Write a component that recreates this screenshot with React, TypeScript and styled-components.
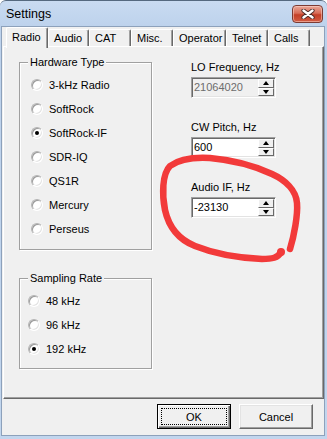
import styled, { createGlobalStyle } from "styled-components";

const GlobalStyle = createGlobalStyle`
  html, body {
    margin: 0;
    padding: 0;
    background: #ffffff;
  }
  body {
    font-family: "Liberation Sans", Arial, sans-serif;
    font-size: 11px;
    color: #000;
  }
`;

// window frame
const Window = styled.div`
  position: relative;
  width: 327px;
  height: 439px;
  box-sizing: border-box;
  display: flex;
  flex-direction: column;
  background: linear-gradient(#c9dbf1, #bdd2ec 26px, #c2d6ee);
  border-top: 1px solid #55697f;
  border-radius: 6px 6px 0 0;
  overflow: hidden;
`;

const TitleBar = styled.div`
  height: 25px;
  display: flex;
  align-items: flex-start;
  padding: 0 4px 0 6px;
`;

const Title = styled.div`
  font-size: 12.5px;
  line-height: 15px;
  padding-top: 6px;
`;

const CloseButton = styled.div`
  margin-left: auto;
  margin-top: 4px;
  width: 31px;
  height: 18px;
  box-sizing: border-box;
  border: 1px solid #7c3b33;
  border-radius: 4px;
  background: linear-gradient(#e9a898, #d86c57 45%, #c43f27 55%, #d35c43);
  box-shadow: inset 0 0 0 1px rgba(255, 220, 210, 0.5);
  display: flex;
  align-items: center;
  justify-content: center;
`;

const Client = styled.div`
  flex: 1;
  margin: 0 2px 3px 1px;
  border: 1px solid #8da1bb;
  background: #f0f0f0;
  display: flex;
  flex-direction: column;
`;

// tabs
const TabStrip = styled.div`
  height: 19px;
  display: flex;
  align-items: flex-end;
  padding-left: 4px;
  position: relative;
  z-index: 1;
`;

const Tab = styled.div<{ $w: number; $active?: boolean }>`
  width: ${(p) => p.$w}px;
  height: ${(p) => (p.$active ? 21 : 17)}px;
  margin-bottom: ${(p) => (p.$active ? -2 : 0)}px;
  box-sizing: border-box;
  border: 1px solid;
  border-color: #ffffff #696969 transparent #ffffff;
  border-bottom: none;
  border-radius: 2px 2px 0 0;
  box-shadow: inset -1px 0 0 #a0a0a0;
  background: #f0f0f0;
  padding: ${(p) => (p.$active ? "0 0 2px 5px" : "0 0 0 5px")};
  display: flex;
  align-items: center;
  white-space: nowrap;
`;

const Panel = styled.div`
  margin-left: 1px;
  height: 353px;
  box-sizing: border-box;
  border: 1px solid;
  border-color: #ffffff #696969 #696969 #ffffff;
  box-shadow: inset -1px -1px 0 #a0a0a0;
  display: flex;
  padding: 14px 0 0 15px;
`;

const LeftCol = styled.div`
  width: 133px;
  margin-top: 1px;
  display: flex;
  flex-direction: column;
  gap: 28px;
`;

const GroupBox = styled.div<{ $pad: string }>`
  position: relative;
  border: 1px solid #a0a0a0;
  box-shadow: 1px 1px 0 #ffffff, inset 1px 1px 0 #ffffff;
  padding: ${(p) => p.$pad};
`;

const GroupCaption = styled.div`
  position: absolute;
  top: -7px;
  left: 8px;
  padding: 0 2px;
  line-height: 13px;
  background: #f0f0f0;
`;

const RadioRow = styled.div`
  height: 24px;
  display: flex;
  align-items: center;
  gap: 6px;
`;

const RadioCircle = styled.span<{ $checked?: boolean }>`
  width: 12px;
  height: 12px;
  box-sizing: border-box;
  border-radius: 50%;
  border: 1px solid;
  border-color: #b4b4b4 #ffffff #ffffff #b4b4b4;
  box-shadow: inset 1px 1px 0 #9a9a9a, inset -1px -1px 0 #e3e3e3;
  background: #ffffff;
  display: flex;
  align-items: center;
  justify-content: center;

  &::after {
    content: "";
    width: 4px;
    height: 4px;
    border-radius: 50%;
    background: ${(p) => (p.$checked ? "#000" : "transparent")};
  }
`;

const RightCol = styled.div`
  margin-left: 39px;
  display: flex;
  flex-direction: column;
  gap: 23px;
`;

const Field = styled.div`
  display: flex;
  flex-direction: column;
  gap: 3px;
`;

const FieldLabel = styled.div`
  line-height: 13px;
`;

const SpinBox = styled.div<{ $disabled?: boolean }>`
  width: 85px;
  height: 21px;
  box-sizing: border-box;
  border: 1px solid;
  border-color: #a0a0a0 #ffffff #ffffff #a0a0a0;
  box-shadow: inset 1px 1px 0 #696969, inset -1px -1px 0 #e3e3e3;
  background: ${(p) => (p.$disabled ? "#f0f0f0" : "#ffffff")};
  color: ${(p) => (p.$disabled ? "#6d6d6d" : "#000")};
  display: flex;
  padding: 1px;
`;

const SpinValue = styled.div`
  flex: 1;
  line-height: 17px;
  padding-left: 1px;
`;

const Spinner = styled.div`
  width: 16px;
  display: flex;
  flex-direction: column;
`;

const SpinButton = styled.div<{ $down?: boolean }>`
  flex: 1;
  box-sizing: border-box;
  border: 1px solid;
  border-color: #ffffff #696969 #696969 #ffffff;
  background: #f0f0f0;
  display: flex;
  align-items: center;
  justify-content: center;

  &::after {
    content: "";
    width: 0;
    height: 0;
    border-left: 3.5px solid transparent;
    border-right: 3.5px solid transparent;
    ${(p) =>
      p.$down
        ? "border-top: 4px solid #000;"
        : "border-bottom: 4px solid #000;"}
  }
`;

const ButtonRow = styled.div`
  display: flex;
  justify-content: flex-end;
  gap: 8px;
  padding: 5px 11px 0 0;
`;

const PushButton = styled.div<{ $default?: boolean }>`
  width: 74px;
  height: 25px;
  box-sizing: border-box;
  display: flex;
  align-items: center;
  justify-content: center;
  background: #f0f0f0;
  border: 1px solid;
  ${(p) =>
    p.$default
      ? `border-color: #000;
         box-shadow: inset 1px 1px 0 #fff, inset -1px -1px 0 #696969, inset -2px -2px 0 #a0a0a0;
         outline: 1px dotted #000;
         outline-offset: -5px;`
      : `border-color: #fff #696969 #696969 #fff;
         box-shadow: inset -1px -1px 0 #a0a0a0, inset 1px 1px 0 #e3e3e3;`}
`;

const Scribble = styled.svg`
  position: absolute;
  top: -1px;
  left: 0;
  width: 327px;
  height: 439px;
  pointer-events: none;
  z-index: 2;
`;

const tabs = [
  { label: "Radio", w: 42 },
  { label: "Audio", w: 41 },
  { label: "CAT", w: 42 },
  { label: "Misc.", w: 42 },
  { label: "Operator", w: 53 },
  { label: "Telnet", w: 42 },
  { label: "Calls", w: 42 },
];

const hardware = [
  "3-kHz Radio",
  "SoftRock",
  "SoftRock-IF",
  "SDR-IQ",
  "QS1R",
  "Mercury",
  "Perseus",
];

const rates = ["48 kHz", "96 kHz", "192 kHz"];

function Spin({ value, disabled }: { value: string; disabled?: boolean }) {
  return (
    <SpinBox $disabled={disabled}>
      <SpinValue>{value}</SpinValue>
      <Spinner>
        <SpinButton />
        <SpinButton $down />
      </Spinner>
    </SpinBox>
  );
}

function App() {
  return (
    <>
      <GlobalStyle />
      <Window>
        <TitleBar>
          <Title>Settings</Title>
          <CloseButton>
            <svg width="14" height="10" viewBox="0 0 14 10">
              <path
                d="M2.5 1.5 L11.5 8.5 M11.5 1.5 L2.5 8.5"
                stroke="#4a2a26"
                strokeWidth="4.2"
                strokeLinecap="round"
              />
              <path
                d="M2.5 1.5 L11.5 8.5 M11.5 1.5 L2.5 8.5"
                stroke="#ffffff"
                strokeWidth="2.4"
                strokeLinecap="round"
              />
            </svg>
          </CloseButton>
        </TitleBar>
        <Client>
          <TabStrip>
            {tabs.map((t, i) => (
              <Tab key={t.label} $w={t.w} $active={i === 0}>
                {t.label}
              </Tab>
            ))}
          </TabStrip>
          <Panel>
            <LeftCol>
              <GroupBox $pad="10px 0 8px 11px">
                <GroupCaption>Hardware Type</GroupCaption>
                {hardware.map((h) => (
                  <RadioRow key={h}>
                    <RadioCircle $checked={h === "SoftRock-IF"} />
                    {h}
                  </RadioRow>
                ))}
              </GroupBox>
              <GroupBox $pad="10px 0 7px 8px">
                <GroupCaption>Sampling Rate</GroupCaption>
                {rates.map((r) => (
                  <RadioRow key={r}>
                    <RadioCircle $checked={r === "192 kHz"} />
                    {r}
                  </RadioRow>
                ))}
              </GroupBox>
            </LeftCol>
            <RightCol>
              <Field>
                <FieldLabel>LO Frequency, Hz</FieldLabel>
                <Spin value="21064020" disabled />
              </Field>
              <Field>
                <FieldLabel>CW Pitch, Hz</FieldLabel>
                <Spin value="600" />
              </Field>
              <Field>
                <FieldLabel>Audio IF, Hz</FieldLabel>
                <Spin value="-23130" />
              </Field>
            </RightCol>
          </Panel>
          <ButtonRow>
            <PushButton $default>OK</PushButton>
            <PushButton>Cancel</PushButton>
          </ButtonRow>
        </Client>
        <Scribble viewBox="0 0 327 439">
          <path
            d="M290 249 C294 236, 298 215, 297 203 C296 190, 285 180, 272 174 C255 166, 232 160, 210 158 C192 157, 178 160, 170 166 C162 174, 162 195, 165 210 C169 228, 180 240, 195 246 C215 254, 240 258, 262 259 C272 259, 278 258, 281 252"
            fill="none"
            stroke="#f23a3a"
            strokeWidth="6.5"
            strokeLinecap="round"
            strokeLinejoin="round"
          />
          <circle cx="281" cy="252" r="4" fill="#f23a3a" />
        </Scribble>
      </Window>
    </>
  );
}

export default App;
